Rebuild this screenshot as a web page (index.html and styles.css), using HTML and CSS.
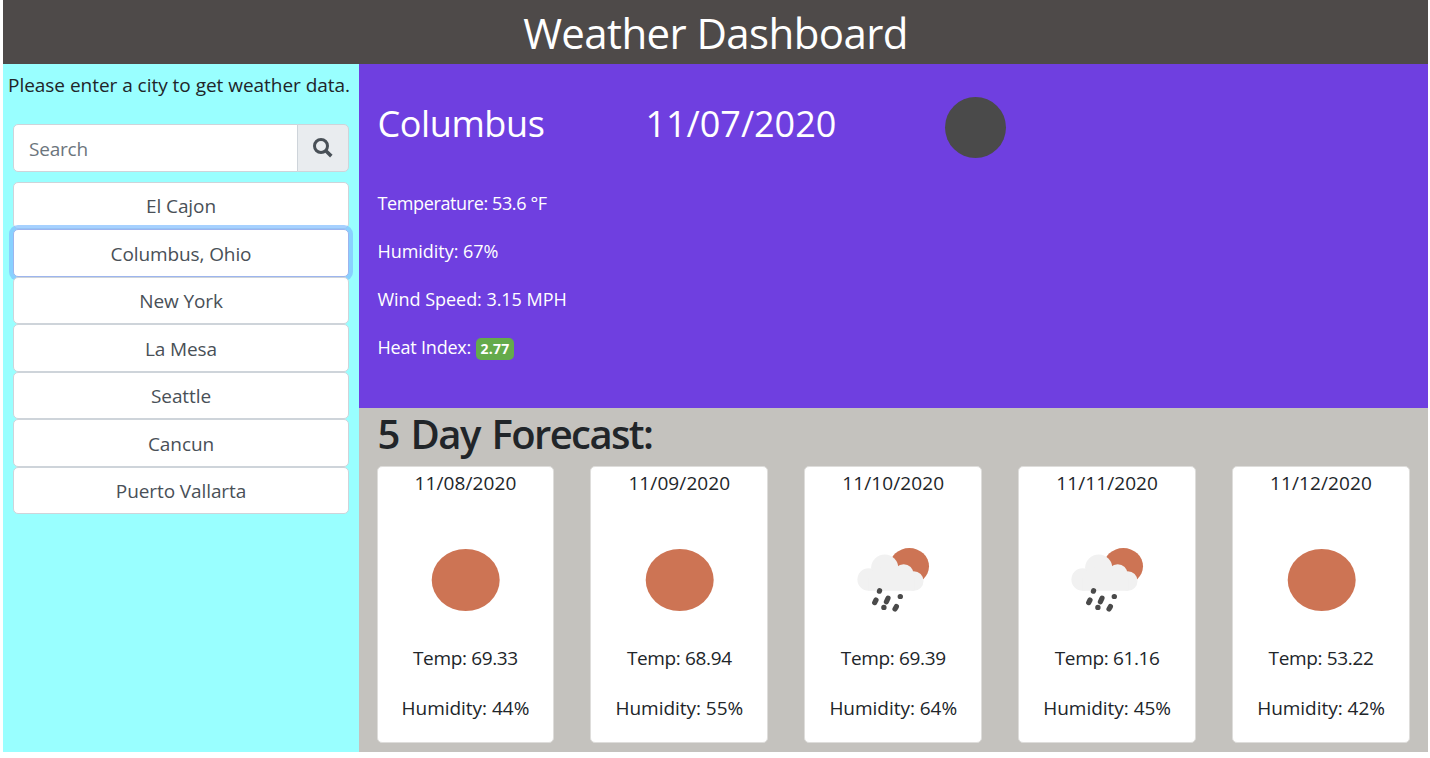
FILE: index.html
```html
<!DOCTYPE html>
<html lang="en">
<head>
<meta charset="utf-8">
<title>Weather Dashboard</title>
<link rel="stylesheet" href="styles.css">
</head>
<body>
<svg class="defs" aria-hidden="true">
  <symbol id="sun" viewBox="0 0 120 100"><ellipse cx="60.7" cy="50" rx="34" ry="31" fill="#cd7454"/></symbol>
  <symbol id="rain" viewBox="0 0 120 100">
    <ellipse cx="76.3" cy="36.3" rx="19.7" ry="18.3" fill="#cd7454"/>
    <g fill="#f1f1f1" transform="translate(7.2 0)">
      <circle cx="28.5" cy="49.5" r="11.3"/>
      <circle cx="44.5" cy="38" r="13.6"/>
      <circle cx="63.5" cy="44" r="9.8"/>
      <circle cx="73.5" cy="51" r="9.8"/>
      <path d="M28 42L44 36L64 42L74 48V60.8H28Z"/>
    </g>
    <g stroke="#4a4a4a" stroke-width="5.2" stroke-linecap="round" transform="translate(7.2 0)">
      <path d="M39.2 61.2l.2-.6M35.8 70l-1.3 2.6M47.8 68.2l-1.6 3.6M43.6 77.4h.2M60 66.5h.2M56.2 76.6l-1.4 2.4"/>
    </g>
  </symbol>
</svg>
<div class="page">
  <header class="header"><h1 class="header-title">Weather Dashboard</h1></header>
  <div class="content">
    <aside class="sidebar">
      <p class="prompt">Please enter a city to get weather data.</p>
      <form class="search">
        <input class="search-input" type="text" placeholder="Search" aria-label="Search">
        <button class="search-button" type="button" aria-label="Find city">
          <svg class="search-icon" viewBox="0 0 20 20"><circle cx="8" cy="8" r="6.5" fill="none" stroke="#495057" stroke-width="3"/><path d="M12.8 12.8L18.3 18.1" stroke="#495057" stroke-width="3.6"/></svg>
        </button>
      </form>
      <div class="cities">
        <button class="city">El Cajon</button>
        <button class="city city-selected">Columbus, Ohio</button>
        <button class="city">New York</button>
        <button class="city">La Mesa</button>
        <button class="city">Seattle</button>
        <button class="city">Cancun</button>
        <button class="city">Puerto Vallarta</button>
      </div>
    </aside>
    <main class="main">
      <section class="current">
        <div class="current-head">
          <h2 class="current-title current-city">Columbus</h2>
          <h2 class="current-title current-date">11/07/2020</h2>
          <div class="current-icon"></div>
        </div>
        <p class="reading reading-temp">Temperature: 53.6 °F</p>
        <p class="reading">Humidity: 67%</p>
        <p class="reading">Wind Speed: 3.15 MPH</p>
        <p class="reading reading-heat">Heat Index: <span class="badge">2.77</span></p>
      </section>
      <section class="forecast">
        <h2 class="forecast-title">5 Day Forecast:</h2>
        <div class="days">
          <article class="day"><p class="day-date">11/08/2020</p><svg class="day-icon"><use href="#sun"/></svg><p class="day-temp">Temp: 69.33</p><p class="day-humidity">Humidity: 44%</p></article>
          <article class="day"><p class="day-date">11/09/2020</p><svg class="day-icon"><use href="#sun"/></svg><p class="day-temp">Temp: 68.94</p><p class="day-humidity">Humidity: 55%</p></article>
          <article class="day"><p class="day-date">11/10/2020</p><svg class="day-icon"><use href="#rain"/></svg><p class="day-temp">Temp: 69.39</p><p class="day-humidity">Humidity: 64%</p></article>
          <article class="day"><p class="day-date">11/11/2020</p><svg class="day-icon"><use href="#rain"/></svg><p class="day-temp">Temp: 61.16</p><p class="day-humidity">Humidity: 45%</p></article>
          <article class="day"><p class="day-date">11/12/2020</p><svg class="day-icon"><use href="#sun"/></svg><p class="day-temp">Temp: 53.22</p><p class="day-humidity">Humidity: 42%</p></article>
        </div>
      </section>
    </main>
  </div>
</div>
</body>
</html>
```
FILE: styles.css
```css
* { box-sizing: border-box; }
body {
  margin: 0;
  background: #fff;
  color: #212529;
  font: 400 19px/28px "Open Sans", "Noto Sans", sans-serif;
  letter-spacing: -0.03px;
}
h1, h2, p { margin: 0; white-space: nowrap; }
button, input { font: inherit; letter-spacing: inherit; margin: 0; }
.defs { display: none; }
.page { padding: 0 2px 0 3px; }
.header { height: 64px; background: #4e4a49; color: #fff; text-align: center; }
.header-title { font-size: 42px; line-height: 66px; font-weight: 400; letter-spacing: -0.6px; }
.content { display: grid; grid-template-columns: 356px 1fr; height: 688px; }
.sidebar { background: #99ffff; padding: 7px 10px 0; }
.prompt { margin: 0 -5px; }
.search { display: flex; height: 48px; margin: 25px 0 9.7px; }
.search-input {
  flex: 1;
  min-width: 0;
  padding: 2px 15px 0;
  border: 1px solid #ced4da;
  border-radius: 5px 0 0 5px;
  background: #fff;
  letter-spacing: -0.2px;
}
.search-input::placeholder { color: #6c757d; opacity: 1; }
.search-button {
  width: 52px;
  margin-left: -1px;
  padding: 0;
  border: 1px solid #ced4da;
  border-radius: 0 5px 5px 0;
  background: #e9ecef;
}
.search-icon { display: block; width: 20px; height: 20px; margin: -1px auto 0; }
.cities { display: flex; flex-direction: column; }
.city {
  height: 47.5px;
  padding: 1.6px 0 0;
  border: 1px solid #ced4da;
  border-radius: 5px;
  background: #fff;
  color: #495057;
  letter-spacing: -0.1px;
}
.city-selected {
  position: relative;
  border-color: #9db5ee;
  box-shadow: 0 0 0 4px rgba(128, 189, 255, .7);
}
.city-selected + .city { position: relative; }
.main { display: grid; grid-template-rows: 344px 344px; min-width: 0; }
.current { background: #6f3fe0; color: #fff; padding: 30px 19px 0 18.5px; }
.current-head { display: flex; height: 95px; }
.current-title { font-size: 36px; line-height: 60px; font-weight: 400; }
.current-city { width: 268px; letter-spacing: -0.4px; }
.current-date { width: 299px; }
.current-icon { width: 61px; height: 61px; margin-top: 3px; border-radius: 50%; background: #4a4a4a; }
.reading { height: 48px; font-size: 18px; line-height: 29px; letter-spacing: -0.04px; }
.reading-temp { letter-spacing: -0.38px; }
.reading-heat { letter-spacing: -0.2px; }
.badge {
  display: inline-block;
  height: 22px;
  padding: 0 5px;
  border-radius: 5px;
  background: #64aa4b;
  font-size: 14px;
  font-weight: 700;
  line-height: 22px;
  letter-spacing: 0.2px;
  vertical-align: 0;
}
.forecast { background: #c4c2be; padding: 0 18px 0 17.5px; }
.forecast-title { height: 58px; padding-left: 1px; font-size: 40px; line-height: 52px; font-weight: 600; letter-spacing: -1.6px; word-spacing: 3px; }
.days { display: grid; grid-template-columns: repeat(5, 1fr); gap: 36px; }
.day {
  display: flex;
  flex-direction: column;
  align-items: center;
  height: 277px;
  border: 1px solid #dedddb;
  border-radius: 5px;
  background: #fff;
}
.day-date { margin-top: 2px; letter-spacing: 0.1px; }
.day-icon { width: 120px; height: 100px; margin: 33px 0 14px; }
.day-temp { letter-spacing: -0.35px; }
.day-humidity { margin-top: 22px; }
```
